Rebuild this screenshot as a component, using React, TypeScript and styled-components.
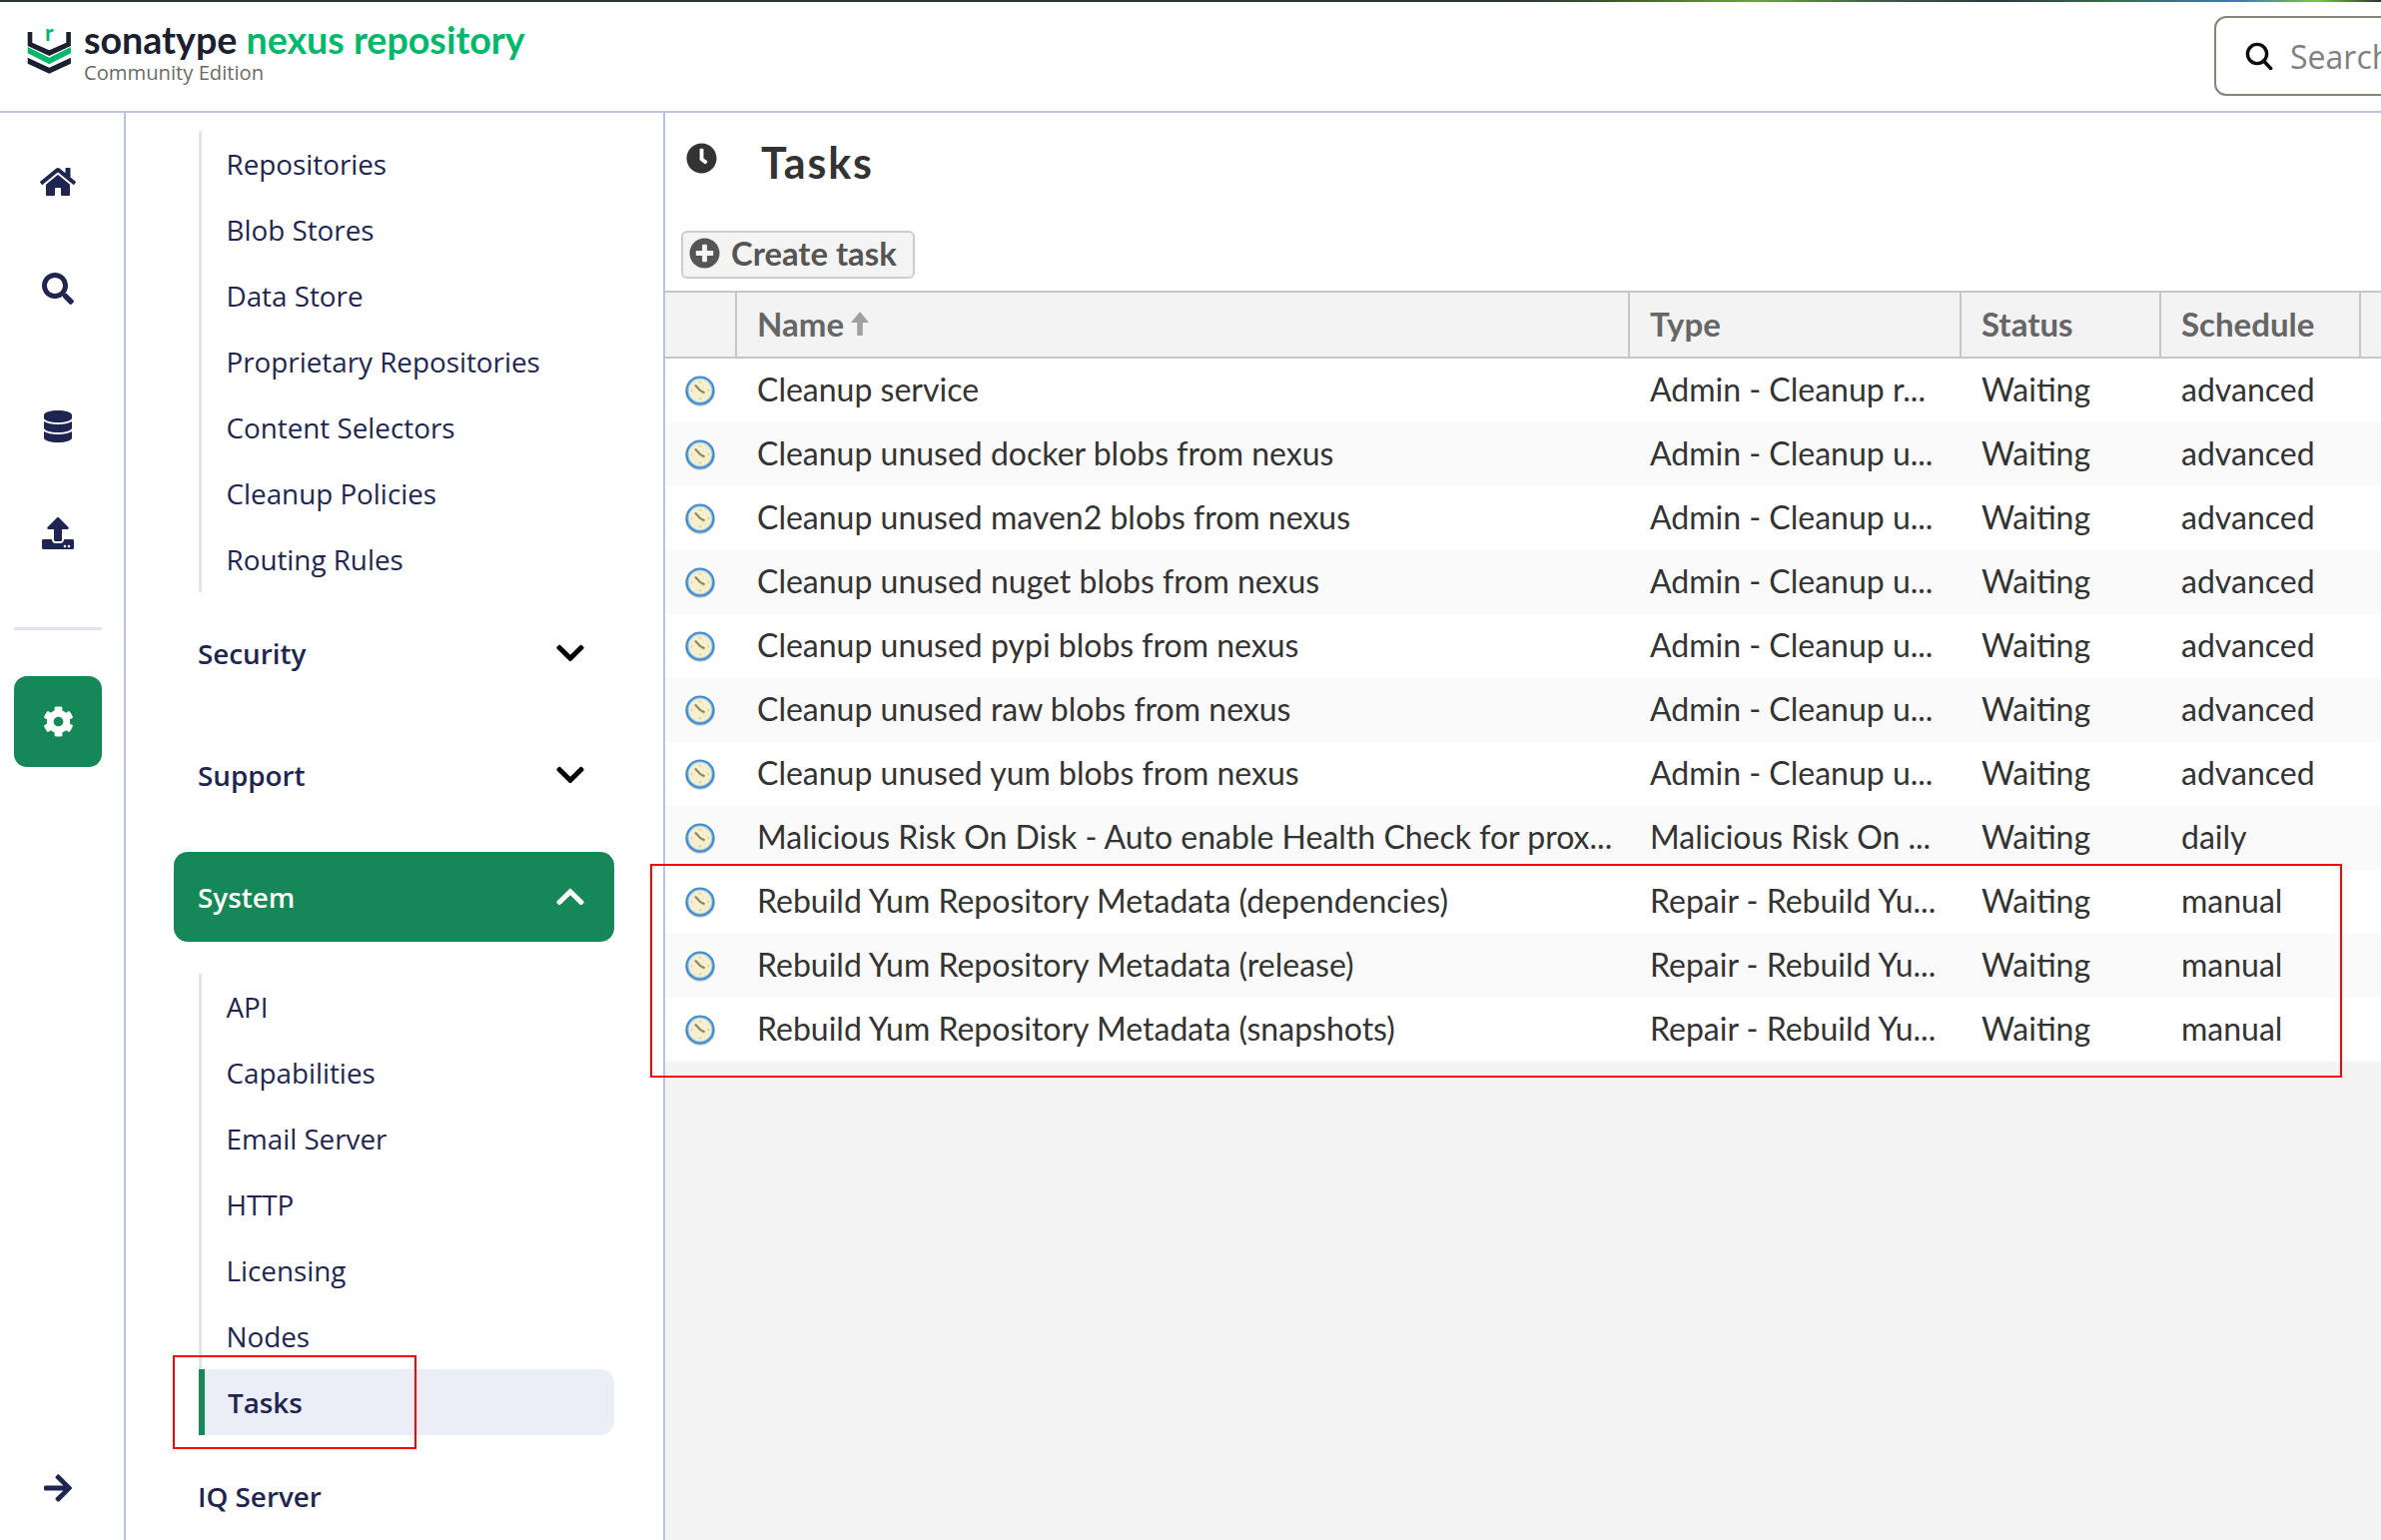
import React from "react"
import styled, { createGlobalStyle } from "styled-components"
import {
  FaArrowRight,
  FaChevronDown,
  FaChevronUp,
  FaClock,
  FaCog,
  FaDatabase,
  FaHome,
  FaPlusCircle,
  FaSearch,
  FaUpload,
} from "react-icons/fa"

const NAVY = "#1d2550"
const GREEN = "#168757"
const RULE = "#b8c3e3"
const GRID = "#c6c6c6"

const GlobalStyle = createGlobalStyle`
  html, body {
    margin: 0;
    padding: 0;
    background: #fff;
    overflow: hidden;
  }
  * {
    box-sizing: border-box;
  }
`

interface Task {
  name: string
  type: string
  schedule: string
}

const tasks: Task[] = [
  { name: "Cleanup service", type: "Admin - Cleanup r...", schedule: "advanced" },
  { name: "Cleanup unused docker blobs from nexus", type: "Admin - Cleanup u...", schedule: "advanced" },
  { name: "Cleanup unused maven2 blobs from nexus", type: "Admin - Cleanup u...", schedule: "advanced" },
  { name: "Cleanup unused nuget blobs from nexus", type: "Admin - Cleanup u...", schedule: "advanced" },
  { name: "Cleanup unused pypi blobs from nexus", type: "Admin - Cleanup u...", schedule: "advanced" },
  { name: "Cleanup unused raw blobs from nexus", type: "Admin - Cleanup u...", schedule: "advanced" },
  { name: "Cleanup unused yum blobs from nexus", type: "Admin - Cleanup u...", schedule: "advanced" },
  { name: "Malicious Risk On Disk - Auto enable Health Check for prox...", type: "Malicious Risk On ...", schedule: "daily" },
  { name: "Rebuild Yum Repository Metadata (dependencies)", type: "Repair - Rebuild Yu...", schedule: "manual" },
  { name: "Rebuild Yum Repository Metadata (release)", type: "Repair - Rebuild Yu...", schedule: "manual" },
  { name: "Rebuild Yum Repository Metadata (snapshots)", type: "Repair - Rebuild Yu...", schedule: "manual" },
]

const repositoryLinks = [
  "Repositories",
  "Blob Stores",
  "Data Store",
  "Proprietary Repositories",
  "Content Selectors",
  "Cleanup Policies",
  "Routing Rules",
]

const systemLinks = ["API", "Capabilities", "Email Server", "HTTP", "Licensing", "Nodes", "Tasks"]

const Logo = () => (
  <S.LogoMark width="46" height="61" viewBox="27 20 46 61">
    <path fill="#1b1f30" d="M27.7 36h4.6v10.7l17 7.6 17-7.6V36h4.6v14l-21.6 10-21.6-10z" />
    <path fill="#00b86b" d="M27.7 51l21.6 10.7L70.9 51v6.3L49.3 68.3 27.7 57.3z" />
    <path fill="#1b1f30" d="M27.7 61.7l21.6 10L70.9 61.7v6L49.3 77.7 27.7 67.7z" />
    <text x="45" y="44.5" fontFamily="Lato, sans-serif" fontWeight="700" fontSize="23" fill="#00b86b">
      r
    </text>
  </S.LogoMark>
)

const HeaderSearchIcon = () => (
  <svg width="28" height="28" viewBox="0 0 28 28">
    <circle cx="12" cy="12" r="9.6" fill="none" stroke="#0d0d0d" strokeWidth="3.4" />
    <path d="M18.6 19l7 7.4" fill="none" stroke="#0d0d0d" strokeWidth="3.6" strokeLinecap="round" />
  </svg>
)

const SortArrow = () => (
  <svg width="20" height="24" viewBox="0 0 20 24">
    <path fill="#a0a0a0" d="M10 0l9 11h-6.2v13H7.2V11H1z" />
  </svg>
)

const StatusClock = () => (
  <svg width="32" height="32" viewBox="0 0 32 32">
    <circle cx="16" cy="17.2" r="14.6" fill="#c4c4c4" />
    <circle cx="16" cy="16" r="14.6" fill="#3f8ccf" />
    <circle cx="16" cy="16" r="12.4" fill="#a9cdea" />
    <circle cx="16" cy="16" r="11.2" fill="#f6efcb" />
    <path d="M11 10.5l5 5.5 4.5 2.5" fill="none" stroke="#8a8670" strokeWidth="2.2" />
    <g fill="#bdb9a2">
      <circle cx="16" cy="7.6" r="0.8" />
      <circle cx="24.4" cy="16" r="0.8" />
      <circle cx="16" cy="24.4" r="0.8" />
      <circle cx="7.6" cy="16" r="0.8" />
    </g>
  </svg>
)

export default function App() {
  return (
    <S.Page>
      <GlobalStyle />
      <S.TopStrip />
      <S.Header>
        <S.Brand>
          <Logo />
          <S.BrandText>
            <S.BrandName>
              sonatype <S.BrandAccent>nexus repository</S.BrandAccent>
            </S.BrandName>
            <S.BrandEdition>Community Edition</S.BrandEdition>
          </S.BrandText>
        </S.Brand>
        <S.SearchBox>
          <HeaderSearchIcon />
          <S.SearchText>Search</S.SearchText>
        </S.SearchBox>
      </S.Header>
      <S.Body>
        <S.Rail>
          <S.RailIcon $top={51}>
            <FaHome size={36} />
          </S.RailIcon>
          <S.RailIcon $top={71}>
            <FaSearch size={32} />
          </S.RailIcon>
          <S.RailIcon $top={102}>
            <FaDatabase size={32} />
          </S.RailIcon>
          <S.RailIcon $top={71}>
            <FaUpload size={32} />
          </S.RailIcon>
          <S.RailDivider />
          <S.RailActive>
            <FaCog size={31} />
          </S.RailActive>
          <S.RailCollapse>
            <FaArrowRight size={32} />
          </S.RailCollapse>
        </S.Rail>
        <S.Nav>
          <S.LinkList>
            {repositoryLinks.map((link) => (
              <S.NavLink key={link}>{link}</S.NavLink>
            ))}
          </S.LinkList>
          <S.Section>
            Security
            <FaChevronDown size={32} color="#000" />
          </S.Section>
          <S.Section>
            Support
            <FaChevronDown size={32} color="#000" />
          </S.Section>
          <S.Section $open>
            System
            <FaChevronUp size={32} color="#fff" />
          </S.Section>
          <S.LinkList>
            {systemLinks.map((link) => (
              <S.NavLink key={link} $active={link === "Tasks"}>
                {link}
              </S.NavLink>
            ))}
          </S.LinkList>
          <S.Section>IQ Server</S.Section>
        </S.Nav>
        <S.Main>
          <S.TitleBar>
            <S.TitleIcon size={31} color="#333" />
            <S.Title>Tasks</S.Title>
          </S.TitleBar>
          <S.Toolbar>
            <S.CreateButton>
              <FaPlusCircle size={31} color="#555" />
              Create task
            </S.CreateButton>
          </S.Toolbar>
          <S.HeaderRow>
            <S.HeaderCell />
            <S.HeaderCell>
              Name
              <SortArrow />
            </S.HeaderCell>
            <S.HeaderCell>Type</S.HeaderCell>
            <S.HeaderCell>Status</S.HeaderCell>
            <S.HeaderCell>Schedule</S.HeaderCell>
            <S.HeaderCell />
          </S.HeaderRow>
          <S.Rows>
            {tasks.map((task, index) => (
              <S.Row key={task.name} $striped={index % 2 === 1}>
                <S.IconCell>
                  <StatusClock />
                </S.IconCell>
                <S.Cell>{task.name}</S.Cell>
                <S.Cell>{task.type}</S.Cell>
                <S.Cell>Waiting</S.Cell>
                <S.Cell>{task.schedule}</S.Cell>
              </S.Row>
            ))}
          </S.Rows>
        </S.Main>
      </S.Body>
      <S.NavCallout />
      <S.TableCallout />
    </S.Page>
  )
}

const S = {
  Page: styled.div`
    position: relative;
    width: 2384px;
    height: 1542px;
    overflow: hidden;
    display: flex;
    flex-direction: column;
    font-family: "Open Sans", sans-serif;
  `,
  TopStrip: styled.div`
    height: 2px;
    flex: none;
    background: linear-gradient(
      to right,
      #2b3238 0,
      #2b3238 1500px,
      #3c5a2c 1620px,
      #6fa63c 1760px,
      #3f5a48 1880px,
      #2b3a44 2000px,
      #3a6a4a 2110px,
      #3f78b8 2240px,
      #7ec83c 2320px,
      #2b3238 2384px
    );
  `,
  Header: styled.header`
    height: 111px;
    flex: none;
    display: flex;
    align-items: center;
    justify-content: space-between;
    border-bottom: 2px solid ${RULE};
    background: #fff;
  `,
  Brand: styled.div`
    display: flex;
    align-items: flex-start;
    gap: 11px;
    padding-left: 27px;
    margin-top: -3px;
  `,
  LogoMark: styled.svg`
    margin-top: -11px;
    flex: none;
  `,
  BrandText: styled.div`
    display: flex;
    flex-direction: column;
    margin-top: -9px;
  `,
  BrandName: styled.div`
    font-family: Lato, sans-serif;
    font-size: 37.6px;
    font-weight: 700;
    line-height: 43px;
    color: #1b1f30;
    white-space: nowrap;
  `,
  BrandAccent: styled.span`
    color: #00b86b;
  `,
  BrandEdition: styled.div`
    font-size: 20.2px;
    line-height: 23px;
    color: #6b6b66;
    white-space: nowrap;
  `,
  SearchBox: styled.div`
    width: 180px;
    height: 80px;
    margin-right: -13px;
    margin-top: -1px;
    padding-left: 29px;
    display: flex;
    align-items: center;
    gap: 17px;
    border: 2px solid #85857a;
    border-radius: 12px;
    overflow: hidden;
  `,
  SearchText: styled.span`
    font-size: 32px;
    color: #808080;
  `,
  Body: styled.div`
    flex: 1;
    display: flex;
    min-height: 0;
  `,
  Rail: styled.aside`
    width: 126px;
    flex: none;
    padding-right: 8px;
    display: flex;
    flex-direction: column;
    align-items: center;
    border-right: 2px solid ${RULE};
    color: ${NAVY};
  `,
  RailIcon: styled.div<{ $top: number }>`
    height: 36px;
    margin-top: ${({ $top }) => $top}px;
    display: flex;
    align-items: center;
    justify-content: center;
    color: ${NAVY};
  `,
  RailDivider: styled.div`
    width: 88px;
    height: 3px;
    margin-top: 76px;
    background: #dfe3f2;
  `,
  RailActive: styled.div`
    width: 88px;
    height: 91px;
    margin-top: 46px;
    display: flex;
    align-items: center;
    justify-content: center;
    border-radius: 13px;
    background: ${GREEN};
    color: #fff;
  `,
  RailCollapse: styled.div`
    margin-top: auto;
    margin-bottom: 36px;
    display: flex;
    color: ${NAVY};
  `,
  Nav: styled.nav`
    width: 540px;
    flex: none;
    padding: 18px 49px 0 48px;
    display: flex;
    flex-direction: column;
    border-right: 2px solid ${RULE};
    overflow: hidden;
    color: ${NAVY};
  `,
  LinkList: styled.div`
    flex: none;
    margin: 0 0 16px 25px;
    border-left: 3px solid #e3e3e0;
  `,
  NavLink: styled.div<{ $active?: boolean }>`
    height: 66px;
    margin-left: ${({ $active }) => ($active ? "-3px" : "0")};
    padding-left: ${({ $active }) => ($active ? "23px" : "24.5px")};
    display: flex;
    align-items: center;
    font-size: 27.8px;
    font-weight: ${({ $active }) => ($active ? 600 : 400)};
    background: ${({ $active }) => ($active ? "#ebeef7" : "transparent")};
    border-left: ${({ $active }) => ($active ? `6px solid ${GREEN}` : "none")};
    border-radius: ${({ $active }) => ($active ? "0 14px 14px 0" : "0")};
  `,
  Section: styled.div<{ $open?: boolean }>`
    height: 90px;
    flex: none;
    margin-bottom: 32px;
    padding: 0 28px 0 24px;
    display: flex;
    align-items: center;
    justify-content: space-between;
    font-size: 27.8px;
    font-weight: 600;
    border-radius: 14px;
    background: ${({ $open }) => ($open ? GREEN : "transparent")};
    color: ${({ $open }) => ($open ? "#fff" : NAVY)};
  `,
  Main: styled.main`
    flex: 1;
    min-width: 0;
    display: flex;
    flex-direction: column;
    background: #f4f4f4;
    font-family: Lato, sans-serif;
  `,
  TitleBar: styled.div`
    height: 88px;
    padding: 10px 0 0 21px;
    display: flex;
    align-items: center;
    gap: 44px;
    background: #fff;
  `,
  TitleIcon: styled(FaClock)`
    margin-bottom: 8px;
  `,
  Title: styled.h1`
    margin: 0;
    font-size: 43px;
    font-weight: 700;
    letter-spacing: 1.8px;
    color: #333;
  `,
  Toolbar: styled.div`
    height: 90px;
    padding: 30px 0 0 16px;
    background: #fff;
  `,
  CreateButton: styled.button`
    width: 234px;
    height: 48px;
    padding: 0 0 3px 6px;
    display: flex;
    align-items: center;
    gap: 11px;
    font-family: Lato, sans-serif;
    font-size: 32.8px;
    font-weight: 700;
    color: #555;
    background: #f4f4f4;
    border: 2px solid #ccc;
    border-radius: 6px;
  `,
  HeaderRow: styled.div`
    height: 68px;
    flex: none;
    display: grid;
    grid-template-columns: 72px 894px 332px 200px 200px 1fr;
    border-top: 2px solid ${GRID};
    border-bottom: 2px solid ${GRID};
    background: #f3f3f3;
  `,
  HeaderCell: styled.div`
    padding: 0 0 3px 20px;
    display: flex;
    align-items: center;
    gap: 6px;
    font-size: 33px;
    font-weight: 700;
    color: #666;
    border-right: 2px solid ${GRID};
    &:last-child {
      border-right: none;
    }
  `,
  Rows: styled.div`
    flex: none;
  `,
  Row: styled.div<{ $striped: boolean }>`
    height: 64px;
    display: grid;
    grid-template-columns: 72px 894px 332px 200px 200px 1fr;
    align-items: center;
    background: ${({ $striped }) => ($striped ? "#fafafa" : "#fff")};
  `,
  IconCell: styled.div`
    padding-left: 19px;
    display: flex;
    align-items: center;
  `,
  Cell: styled.div`
    padding: 0 0 3px 20px;
    font-size: 32px;
    color: #333;
    white-space: nowrap;
  `,
  NavCallout: styled.div`
    position: absolute;
    left: 173px;
    top: 1357px;
    width: 244px;
    height: 94px;
    border: 2px solid #f00;
  `,
  TableCallout: styled.div`
    position: absolute;
    left: 651px;
    top: 865px;
    width: 1694px;
    height: 214px;
    border: 2px solid #f00;
  `,
}
